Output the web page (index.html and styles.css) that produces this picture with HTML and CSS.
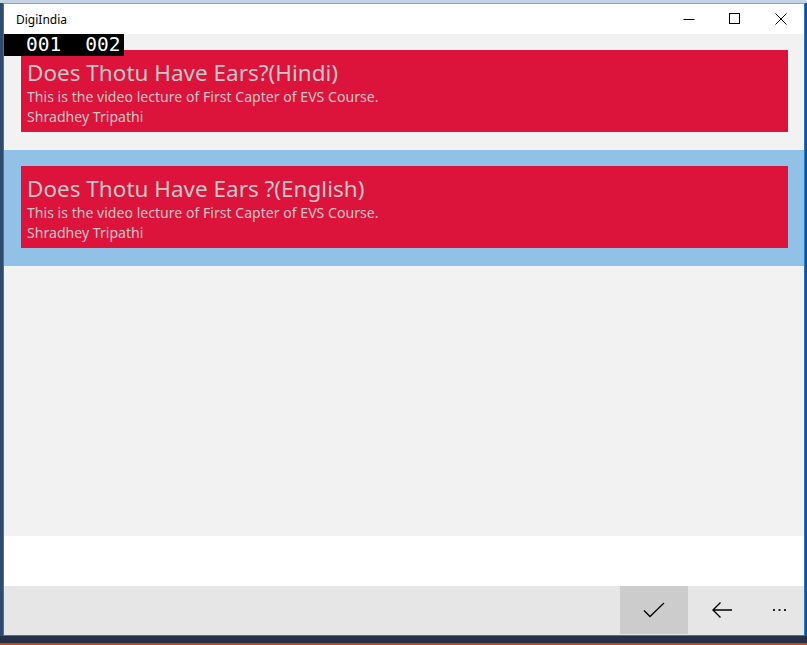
FILE: index.html
```html
<!DOCTYPE html>
<html>
<head>
<meta charset="utf-8">
<link rel="stylesheet" href="styles.css">
</head>
<body>
<div class="desk-top"></div>
<div class="window">
  <div class="titlebar">
    <span class="title">DigiIndia</span>
    <div class="controls">
      <span class="ctl"><svg width="12" height="12" viewBox="0 0 12 12"><path d="M0.5 6.5h11" stroke="#000" stroke-width="1"/></svg></span>
      <span class="ctl"><svg width="12" height="12" viewBox="0 0 12 12"><rect x="0.5" y="0.5" width="10" height="10" fill="none" stroke="#000" stroke-width="1"/></svg></span>
      <span class="ctl"><svg width="12" height="12" viewBox="0 0 12 12"><path d="M0.5 0.5l11 11M11.5 0.5l-11 11" stroke="#000" stroke-width="1"/></svg></span>
    </div>
  </div>
  <div class="content">
    <div class="fps"><span>001</span><span>002</span></div>
    <div class="item">
      <div class="card">
        <div class="card-title">Does Thotu Have Ears?(Hindi)</div>
        <div class="card-line">This is the video lecture of First Capter of EVS Course.</div>
        <div class="card-line">Shradhey Tripathi</div>
      </div>
    </div>
    <div class="item selected">
      <div class="card">
        <div class="card-title">Does Thotu Have Ears ?(English)</div>
        <div class="card-line">This is the video lecture of First Capter of EVS Course.</div>
        <div class="card-line">Shradhey Tripathi</div>
      </div>
    </div>
  </div>
  <div class="blank"></div>
  <div class="appbar">
    <button class="abtn active"><svg width="22" height="16" viewBox="0 0 22 16"><path d="M1 8.5l6 6L21 1" fill="none" stroke="#000" stroke-width="1.3"/></svg></button>
    <button class="abtn"><svg width="22" height="18" viewBox="0 0 22 18"><path d="M21 9H2M9.5 1.5L2 9l7.5 7.5" fill="none" stroke="#000" stroke-width="1.4"/></svg></button>
    <button class="abtn more"><svg width="14" height="3" viewBox="0 0 14 3"><rect x="0" y="0" width="2" height="2" fill="#222"/><rect x="5.5" y="0" width="2" height="2" fill="#222"/><rect x="11" y="0" width="2" height="2" fill="#222"/></svg></button>
  </div>
</div>
<div class="taskbar"></div>
<div class="taskbar-accent"></div>
</body>
</html>
```
FILE: styles.css
```css
html, body {
  margin: 0;
  padding: 0;
}
body {
  width: 807px;
  height: 645px;
  background: #2e4a6e;
  overflow: hidden;
  font-family: "Segoe UI", "Noto Sans", sans-serif;
}
.desk-top {
  height: 3px;
  background: #c4d3e3;
}
.window {
  margin-left: 3px;
  width: 800px;
  height: 631px;
  border: 1px solid #1a7fd4;
  border-top-color: #6fa8dc;
  background: #fff;
  display: flex;
  flex-direction: column;
}
.titlebar {
  height: 30px;
  flex: none;
  display: flex;
  align-items: center;
  justify-content: space-between;
  background: #fff;
}
.title {
  font-size: 12px;
  padding-left: 12px;
  color: #000;
}
.controls {
  display: flex;
  height: 30px;
}
.ctl {
  width: 46px;
  display: flex;
  align-items: center;
  justify-content: center;
}
.content {
  height: 502px;
  flex: none;
  background: #f2f2f2;
  position: relative;
}
.fps {
  position: absolute;
  left: 0;
  top: 0;
  width: 120px;
  height: 22px;
  background: #000;
  color: #fff;
  font-family: "DejaVu Sans Mono", monospace;
  font-size: 19.5px;
  line-height: 22px;
  display: flex;
  gap: 24px;
  padding-left: 22px;
  box-sizing: border-box;
}
.item {
  padding: 16px 16px 18px 17px;
}
.item.selected {
  background: #92c1e7;
}
.card {
  background: #dc143c;
  height: 82px;
  box-sizing: border-box;
  padding: 8px 0 0 6px;
  color: #cbc5c7;
}
.card-title {
  font-size: 22.5px;
  line-height: 29px;
}
.card-line {
  font-size: 14.1px;
  line-height: 20px;
}
.blank {
  height: 50px;
  flex: none;
  background: #fff;
}
.appbar {
  flex: 1;
  background: #e6e6e6;
  display: flex;
  justify-content: flex-end;
}
.abtn {
  width: 68px;
  height: 48px;
  border: 0;
  margin: 0;
  padding: 0;
  background: transparent;
  display: flex;
  align-items: center;
  justify-content: center;
}
.abtn.active {
  background: #cccccc;
}
.abtn.more {
  width: 48px;
}
.taskbar {
  height: 7px;
  background: #253049;
}
.taskbar-accent {
  height: 3px;
  background: #c04a00;
}
```
